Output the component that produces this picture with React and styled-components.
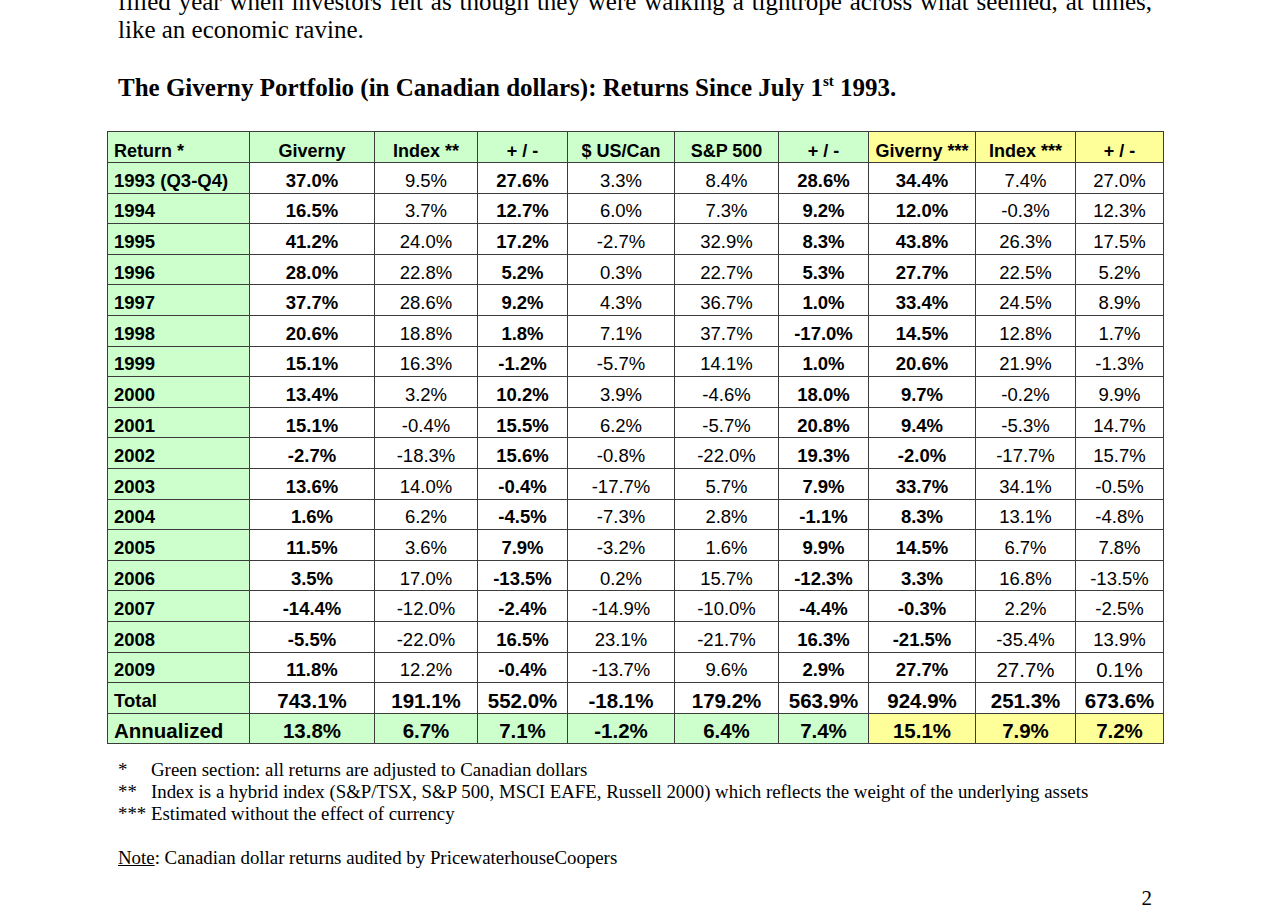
import React from "react";
import styled, { createGlobalStyle } from "styled-components";

const GREEN = "#ccffcc";
const YELLOW = "#ffff99";

const columns = [
  { title: "Return *", width: 142, bold: true, head: GREEN },
  { title: "Giverny", width: 125, bold: true, head: GREEN },
  { title: "Index **", width: 103, bold: false, head: GREEN },
  { title: "+ / -", width: 90, bold: true, head: GREEN },
  { title: "$ US/Can", width: 107, bold: false, head: GREEN },
  { title: "S&P 500", width: 104, bold: false, head: GREEN },
  { title: "+ / -", width: 90, bold: true, head: GREEN },
  { title: "Giverny ***", width: 107, bold: true, head: YELLOW },
  { title: "Index ***", width: 100, bold: false, head: YELLOW },
  { title: "+ / -", width: 88, bold: false, head: YELLOW },
];

const years = [
  ["1993 (Q3-Q4)", "37.0", "9.5", "27.6", "3.3", "8.4", "28.6", "34.4", "7.4", "27.0"],
  ["1994", "16.5", "3.7", "12.7", "6.0", "7.3", "9.2", "12.0", "-0.3", "12.3"],
  ["1995", "41.2", "24.0", "17.2", "-2.7", "32.9", "8.3", "43.8", "26.3", "17.5"],
  ["1996", "28.0", "22.8", "5.2", "0.3", "22.7", "5.3", "27.7", "22.5", "5.2"],
  ["1997", "37.7", "28.6", "9.2", "4.3", "36.7", "1.0", "33.4", "24.5", "8.9"],
  ["1998", "20.6", "18.8", "1.8", "7.1", "37.7", "-17.0", "14.5", "12.8", "1.7"],
  ["1999", "15.1", "16.3", "-1.2", "-5.7", "14.1", "1.0", "20.6", "21.9", "-1.3"],
  ["2000", "13.4", "3.2", "10.2", "3.9", "-4.6", "18.0", "9.7", "-0.2", "9.9"],
  ["2001", "15.1", "-0.4", "15.5", "6.2", "-5.7", "20.8", "9.4", "-5.3", "14.7"],
  ["2002", "-2.7", "-18.3", "15.6", "-0.8", "-22.0", "19.3", "-2.0", "-17.7", "15.7"],
  ["2003", "13.6", "14.0", "-0.4", "-17.7", "5.7", "7.9", "33.7", "34.1", "-0.5"],
  ["2004", "1.6", "6.2", "-4.5", "-7.3", "2.8", "-1.1", "8.3", "13.1", "-4.8"],
  ["2005", "11.5", "3.6", "7.9", "-3.2", "1.6", "9.9", "14.5", "6.7", "7.8"],
  ["2006", "3.5", "17.0", "-13.5", "0.2", "15.7", "-12.3", "3.3", "16.8", "-13.5"],
  ["2007", "-14.4", "-12.0", "-2.4", "-14.9", "-10.0", "-4.4", "-0.3", "2.2", "-2.5"],
  ["2008", "-5.5", "-22.0", "16.5", "23.1", "-21.7", "16.3", "-21.5", "-35.4", "13.9"],
  ["2009", "11.8", "12.2", "-0.4", "-13.7", "9.6", "2.9", "27.7", "27.7", "0.1"],
];

const total = ["Total", "743.1", "191.1", "552.0", "-18.1", "179.2", "563.9", "924.9", "251.3", "673.6"];
const annualized = ["Annualized", "13.8", "6.7", "7.1", "-1.2", "6.4", "7.4", "15.1", "7.9", "7.2"];

const GlobalStyle = createGlobalStyle`
  html, body {
    margin: 0;
    background: #ffffff;
    color: #000000;
    overflow: hidden;
  }
`;

const Page = styled.div`
  width: 1034px;
  padding: 0 0 0 118px;
  font-family: "Liberation Serif", "Times New Roman", serif;
`;

const Intro = styled.p`
  margin: -12px 0 0;
  font-size: 25px;
  line-height: 28px;
`;

const JustifiedLine = styled.span`
  display: block;
  text-align: justify;
  text-align-last: justify;
`;

const Title = styled.h2`
  margin: 29px 0 0;
  font-size: 25px;
  line-height: 29px;
  font-weight: bold;

  sup {
    font-size: 15px;
    line-height: 0;
    vertical-align: 10px;
  }
`;

const Table = styled.table`
  margin: 29px -11px 0;
  width: 1056px;
  border-collapse: collapse;
  table-layout: fixed;
  font-family: "Liberation Sans", Arial, sans-serif;
`;

const Row = styled.tr`
  height: 30.6px;
`;

const Cell = styled.td`
  border: 1px solid #3c3c3c;
  padding: 6px 6px 0;
  background: ${(p) => p.$bg || "#ffffff"};
  text-align: ${(p) => (p.$label ? "left" : "center")};
  font-weight: ${(p) => (p.$bold ? "bold" : "normal")};
  font-size: ${(p) => p.$size || 18.5}px;
  line-height: 22px;
  white-space: nowrap;
  overflow: hidden;
`;

const HeadCell = styled(Cell).attrs({ as: "th" })`
  padding-top: 8px;
  font-size: 18px;
  font-weight: bold;
`;

const Notes = styled.div`
  margin-top: 15px;
  font-size: 18.85px;
  line-height: 22px;
`;

const NoteLine = styled.div`
  display: flex;
  margin-top: ${(p) => (p.$gap ? "22px" : "0")};
`;

const Marker = styled.span`
  width: 33px;
  flex: none;
`;

const Underline = styled.span`
  text-decoration: underline;
`;

const PageNumber = styled.div`
  margin-top: 17px;
  text-align: right;
  font-size: 21px;
  line-height: 24px;
`;

function DataRow({ cells, kind }) {
  return (
    <Row>
      {cells.map((value, i) => {
        const label = i === 0;
        let bg = label ? GREEN : "#ffffff";
        let bold = columns[i].bold;
        let size = 18.5;
        if (kind === "total") {
          bold = true;
          size = label ? 18.5 : 20.5;
        }
        if (kind === "annualized") {
          bold = true;
          size = 20.5;
          bg = columns[i].head;
        }
        if (kind === "last" && i >= 8) size = 20.5;
        return (
          <Cell key={i} $label={label} $bg={bg} $bold={bold} $size={size}>
            {label ? value : `${value}%`}
          </Cell>
        );
      })}
    </Row>
  );
}

export default function App() {
  return (
    <Page>
      <GlobalStyle />
      <Intro>
        <JustifiedLine>
          filled year when investors felt as though they were walking a tightrope across what seemed, at times,
        </JustifiedLine>
        like an economic ravine.
      </Intro>

      <Title>
        The Giverny Portfolio (in Canadian dollars): Returns Since July 1<sup>st</sup> 1993.
      </Title>

      <Table>
        <colgroup>
          {columns.map((c, i) => (
            <col key={i} style={{ width: c.width }} />
          ))}
        </colgroup>
        <thead>
          <Row>
            {columns.map((c, i) => (
              <HeadCell key={i} $label={i === 0} $bg={c.head}>
                {c.title}
              </HeadCell>
            ))}
          </Row>
        </thead>
        <tbody>
          {years.map((r, i) => (
            <DataRow key={r[0]} cells={r} kind={i === years.length - 1 ? "last" : "year"} />
          ))}
          <DataRow cells={total} kind="total" />
          <DataRow cells={annualized} kind="annualized" />
        </tbody>
      </Table>

      <Notes>
        <NoteLine>
          <Marker>*</Marker>
          <span>Green section: all returns are adjusted to Canadian dollars</span>
        </NoteLine>
        <NoteLine>
          <Marker>**</Marker>
          <span>Index is a hybrid index (S&amp;P/TSX, S&amp;P 500, MSCI EAFE, Russell 2000) which reflects the weight of the underlying assets</span>
        </NoteLine>
        <NoteLine>
          <Marker>***</Marker>
          <span>Estimated without the effect of currency</span>
        </NoteLine>
        <NoteLine $gap>
          <span>
            <Underline>Note</Underline>: Canadian dollar returns audited by PricewaterhouseCoopers
          </span>
        </NoteLine>
      </Notes>

      <PageNumber>2</PageNumber>
    </Page>
  );
}
